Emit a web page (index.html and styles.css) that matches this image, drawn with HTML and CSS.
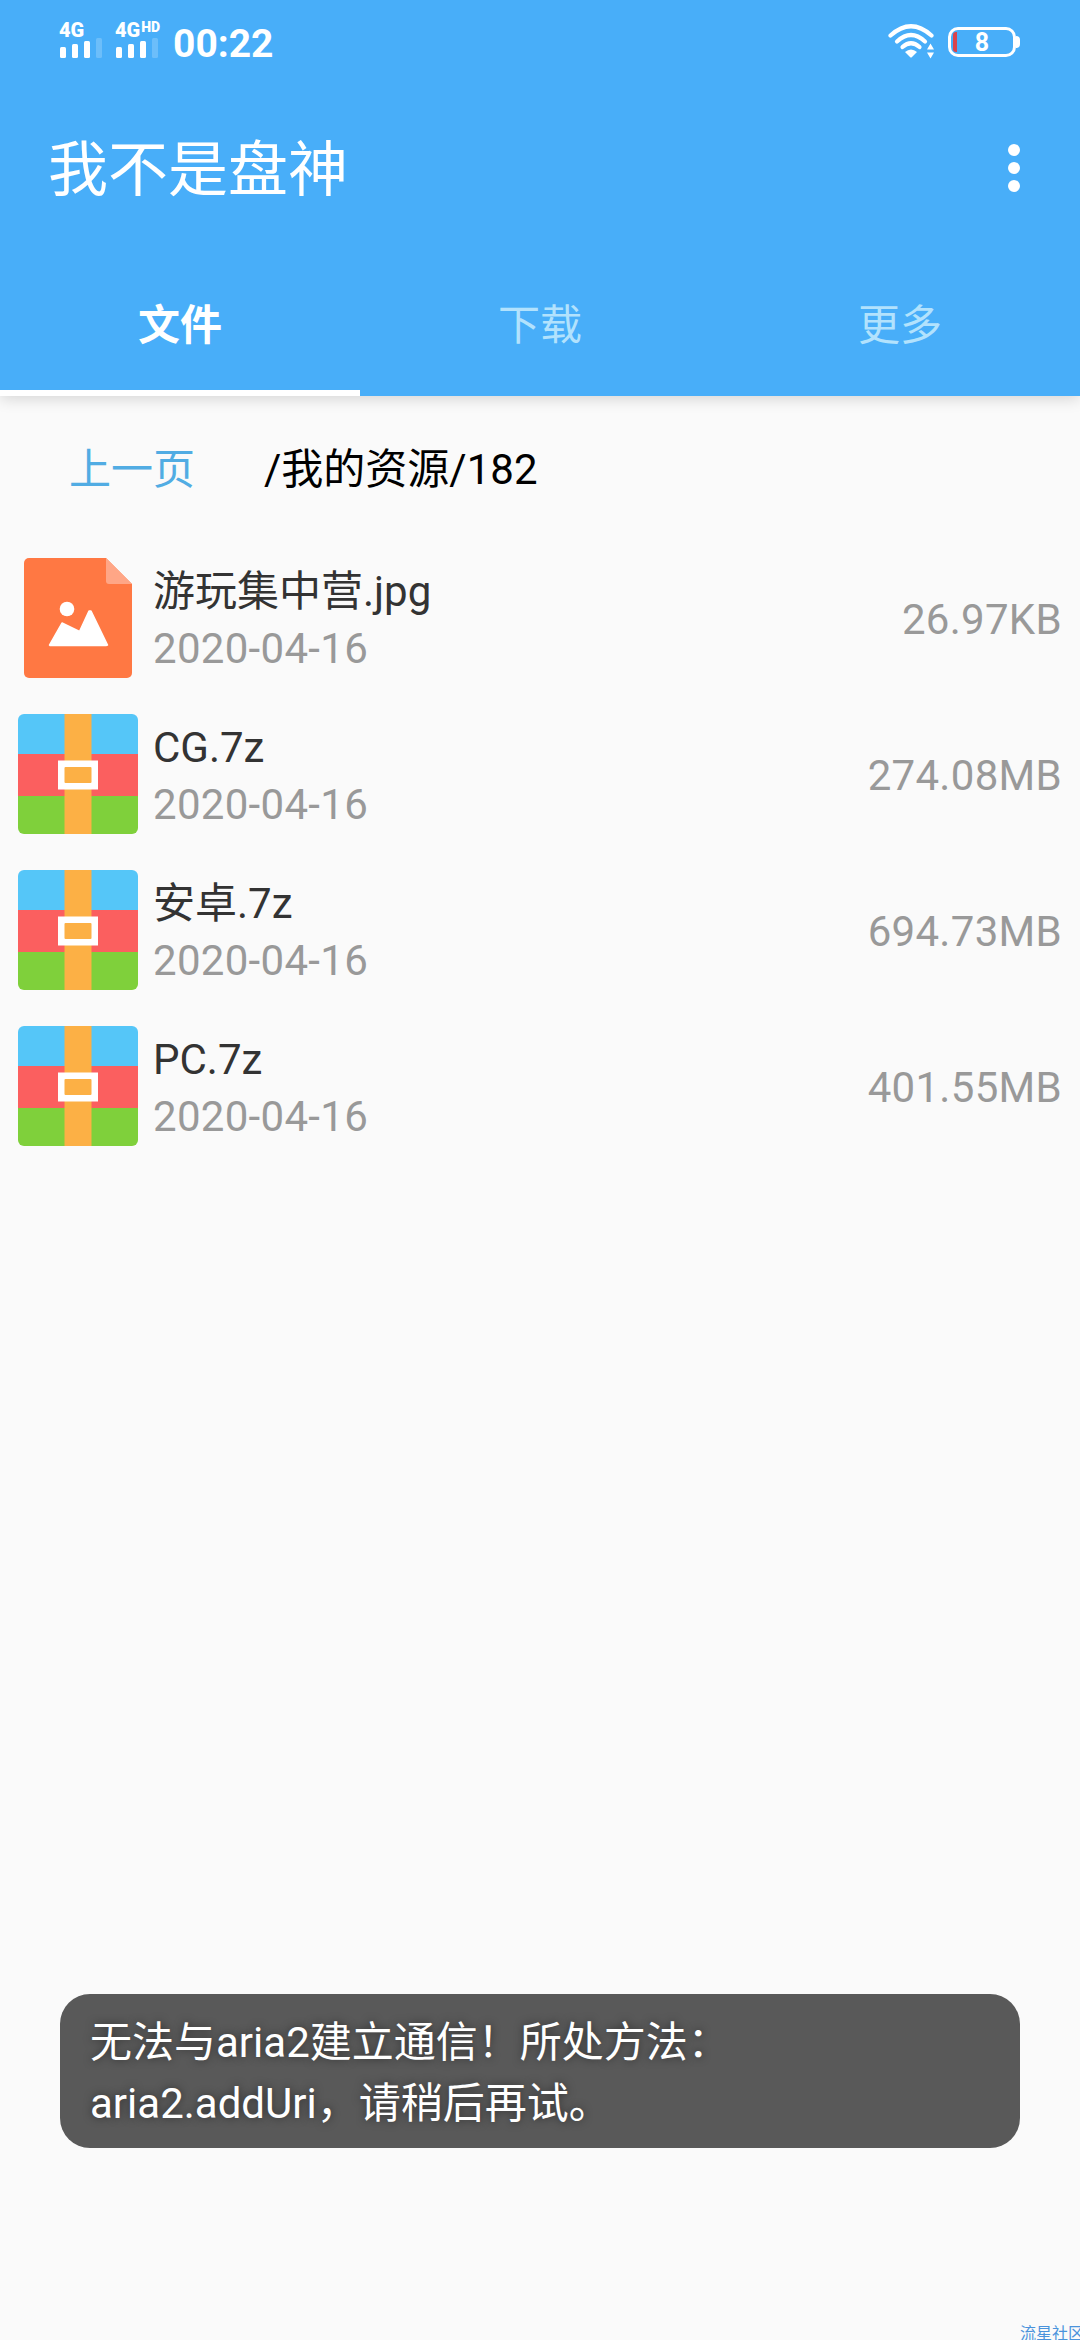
FILE: index.html
```html
<!DOCTYPE html>
<html lang="zh-CN">
<head>
    <meta charset="UTF-8">
    <meta name="viewport" content="width=device-width, initial-scale=1.0">
    <title>我不是盘神</title>
    <link rel="stylesheet" href="styles.css">
</head>
<body>

    <svg class="sprite">
        <symbol id="zip" viewBox="0 0 120 120">
            <path d="M0 40V6a6 6 0 0 1 6-6h108a6 6 0 0 1 6 6v34z" fill="#55c6f8"/>
            <path d="M0 40h120v42H0z" fill="#fb5f5f"/>
            <path d="M0 82h120v32a6 6 0 0 1-6 6H6a6 6 0 0 1-6-6z" fill="#7fd03b"/>
            <path d="M46.500 0h27v120h-27z" fill="#fcb045"/>
            <path d="M40 46.500h40v29H40z" fill="#fff"/>
            <rect x="46.500" y="53" width="27" height="16" rx="1" fill="#fcb045"/>
        </symbol>
        <symbol id="bars" viewBox="0 0 42 20">
            <g fill="#fff">
                <rect x="0" y="9" width="6" height="11" rx="1.500"/>
                <rect x="12" y="6" width="6" height="14" rx="1.500"/>
                <rect x="24" y="3" width="6" height="17" rx="1.500"/>
                <rect x="36" y="0" width="6" height="20" rx="1.500" opacity=".2"/>
            </g>
        </symbol>
    </svg>

    <!-- Header -->
    <div class="header">
        <div class="status-bar">
            <div class="signal">
                <span class="network">4G</span>
                <svg class="bars"><use href="#bars"/></svg>
            </div>
            <div class="signal">
                <span class="network">4G<small>HD</small></span>
                <svg class="bars"><use href="#bars"/></svg>
            </div>
            <span class="time">00:22</span>

            <svg class="wifi" viewBox="0 0 48 36">
                <g fill="none" stroke="#fff" stroke-width="4.200" stroke-linecap="round">
                    <path d="M2.500 11.500Q23 -7 43.500 11.500"/>
                    <path d="M9 17.500Q23 4.500 37 17.500"/>
                    <path d="M14.500 23Q23 15.500 31.500 23"/>
                </g>
                <path d="M17 28Q23 23 29 28L24 33Q23 34 22 33z" fill="#fff"/>
                <path d="M39 25.500h7l-3.500-6zM39 28.500h7l-3.500 6z" fill="#fff"/>
            </svg>
            <div class="battery"><span class="battery-level"></span>8</div>
        </div>

        <div class="title-bar">
            <h1>我不是盘神</h1>
            <div class="menu-btn"><i></i><i></i><i></i></div>
        </div>

        <div class="tabs">
            <div class="tab active">文件</div>
            <div class="tab">下载</div>
            <div class="tab">更多</div>
        </div>
    </div>

    <!-- Current folder -->
    <div class="path-bar">
        <a class="prev">上一页</a>
        <span>/我的资源/182</span>
    </div>

    <!-- File list -->
    <ul class="file-list">
        <li>
            <svg class="icon" viewBox="0 0 120 120">
                <path d="M11 0H88L114 26V115a5 5 0 0 1-5 5H11a5 5 0 0 1-5-5V5a5 5 0 0 1 5-5z" fill="#ff7843"/>
                <path d="M88 0L114 26H91a3 3 0 0 1-3-3z" fill="#ffa686"/>
                <circle cx="49" cy="51" r="7.300" fill="#fff"/>
                <path d="M31.500 87L44 65L61.500 73.500L71 53L73 53L89.500 87L88 87.500H32z" fill="#fff" stroke="#fff" stroke-width="1.500" stroke-linejoin="round"/>
            </svg>
            <div class="info">
                <p class="name">游玩集中营.jpg</p>
                <p class="date">2020-04-16</p>
            </div>
            <span class="size">26.97KB</span>
        </li>
        <li>
            <svg class="icon"><use href="#zip"/></svg>
            <div class="info">
                <p class="name">CG.7z</p>
                <p class="date">2020-04-16</p>
            </div>
            <span class="size">274.08MB</span>
        </li>
        <li>
            <svg class="icon"><use href="#zip"/></svg>
            <div class="info">
                <p class="name">安卓.7z</p>
                <p class="date">2020-04-16</p>
            </div>
            <span class="size">694.73MB</span>
        </li>
        <li>
            <svg class="icon"><use href="#zip"/></svg>
            <div class="info">
                <p class="name">PC.7z</p>
                <p class="date">2020-04-16</p>
            </div>
            <span class="size">401.55MB</span>
        </li>
    </ul>

    <!-- Toast -->
    <div class="toast">无法与aria2建立通信！所处方法：<br>aria2.addUri，请稍后再试。</div>

    <div class="watermark">流星社区</div>

</body>
</html>
```
FILE: styles.css
```css
* {
    box-sizing: border-box;
}

body {
    font-family: Roboto, "Noto Sans CJK SC", sans-serif;
    font-size: 42px;
    margin: 0;
    height: 2340px;
    background-color: #fafafa;
    position: relative;
    overflow: hidden;
}

.sprite {
    display: none;
}

/* Header */
.header {
    height: 396px;
    background-color: #48aef9;
    color: #fff;
    box-shadow: 0 3px 14px rgba(0, 0, 0, 0.15);
    display: flex;
    flex-direction: column;
}

.status-bar {
    height: 84px;
    padding: 0 60px 0 59px;
    display: flex;
    align-items: center;
}

.signal {
    width: 56px;
    height: 36px;
    margin-top: -6px;
    display: flex;
    flex-direction: column;
    justify-content: space-between;
}

.signal + .signal {
    width: 58px;
}

.status-bar .signal {
    margin-top: -5px;
}

.network {
    font-size: 20px;
    font-weight: 900;
    line-height: 16px;
    height: 16px;
    display: flex;
    white-space: nowrap;
}

.network small {
    font-size: 14px;
    line-height: 10px;
    margin-left: 1px;
}

.bars {
    width: 42px;
    height: 20px;
    margin-left: 1px;
}

.time {
    font-size: 39px;
    font-weight: 700;
    line-height: 46px;
    padding-top: 3px;
}

.wifi {
    width: 48px;
    height: 36px;
    margin-left: auto;
    margin-right: 12px;
}

.battery {
    width: 68px;
    height: 30px;
    margin-right: 4px;
    border: 3px solid #fff;
    border-radius: 10px;
    font-size: 25px;
    font-weight: 700;
    line-height: 25px;
    text-align: center;
    position: relative;
}

.battery::after {
    content: "";
    position: absolute;
    right: -7px;
    top: 6px;
    width: 4px;
    height: 12px;
    border-radius: 0 4px 4px 0;
    background-color: #fff;
}

.battery-level {
    position: absolute;
    left: 2px;
    top: 2px;
    width: 4px;
    height: 20px;
    border-radius: 3px 0 0 3px;
    background-color: #d9444c;
}

.title-bar {
    height: 168px;
    padding: 0 60px 0 48px;
    display: flex;
    align-items: center;
    justify-content: space-between;
}

.title-bar h1 {
    margin: 0;
    padding-top: 5px;
    font-size: 60px;
    font-weight: 400;
    line-height: 88px;
}

.menu-btn {
    display: flex;
    flex-direction: column;
    gap: 6px;
}

.menu-btn i {
    width: 12px;
    height: 12px;
    border-radius: 50%;
    background-color: #fff;
}

/* Tabs */
.tabs {
    height: 144px;
    display: flex;
}

.tab {
    flex: 1;
    line-height: 148px;
    text-align: center;
    color: #b2e2fd;
}

.tab.active {
    color: #fff;
    font-weight: 700;
    border-bottom: 6px solid #fff;
}

/* Current folder */
.path-bar {
    height: 144px;
    padding: 0 69px 6px;
    display: flex;
    align-items: center;
    gap: 69px;
    color: #000;
}

.prev {
    color: #51ace3;
}

/* File list */
.file-list {
    list-style: none;
    margin: 0;
    padding: 0;
}

.file-list li {
    height: 156px;
    padding: 0 18px;
    display: flex;
    align-items: center;
}

.icon {
    width: 120px;
    height: 120px;
    margin-right: 15px;
}

.info {
    flex: 1;
    padding-top: 3px;
}

.info p {
    margin: 0;
    line-height: 57px;
}

.name {
    color: #333;
}

.date,
.size {
    color: #999;
    letter-spacing: 0.3px;
}

.size {
    padding-top: 2px;
}

/* Toast */
.toast {
    position: absolute;
    left: 60px;
    top: 1994px;
    width: 960px;
    height: 154px;
    padding: 18px 30px 0;
    border-radius: 30px;
    background-color: #595959;
    color: #fff;
    line-height: 61px;
    text-shadow: 0 0 8px rgba(0, 0, 0, 0.5);
}

.watermark {
    position: absolute;
    left: 1020px;
    top: 2325px;
    width: 60px;
    height: 15px;
    overflow: hidden;
    font-size: 16px;
    line-height: 18px;
    white-space: nowrap;
    color: #4a93dc;
}
```
